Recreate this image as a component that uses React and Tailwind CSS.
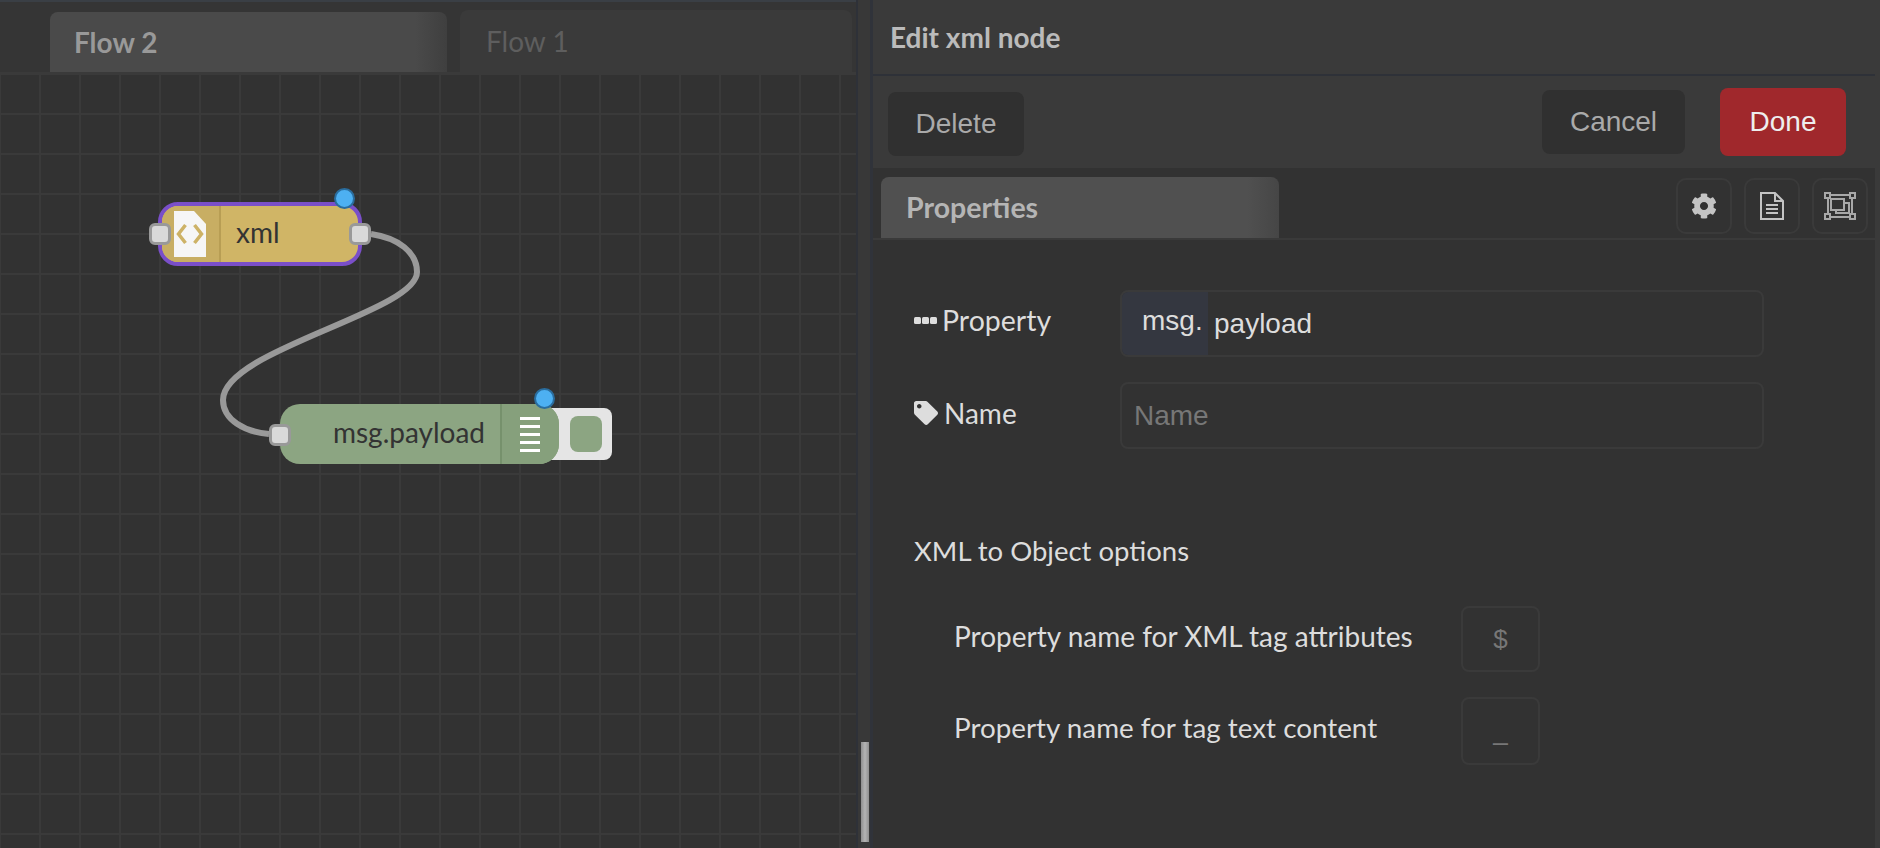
import React from 'react';
import { FaCog, FaTag } from 'react-icons/fa';

const lato = { fontFamily: 'Lato, sans-serif' };
const arial = { fontFamily: '"Liberation Sans", sans-serif' };

function Port({ className }) {
  return <div className={`absolute w-[22px] h-[22px] rounded-[6px] bg-[#d9d9d9] border-[3px] border-[#999999] ${className}`} />;
}

function Changed({ className }) {
  return <div className={`absolute w-[21px] h-[21px] rounded-full bg-[#4db0f2] border-[2.5px] border-[#2a6d9e] ${className}`} />;
}

function XmlNode() {
  return (
    <div className="absolute left-[158px] top-[128px] w-[204px] h-[64px]">
      <div className="flex h-full rounded-[20px] border-[4px] border-[#7a4fc9] bg-[#d0b566] overflow-hidden">
        <div className="w-[59px] shrink-0 bg-[#c8ae63] border-r-2 border-[#b89e54] pl-[12px] pt-[5px]">
          <svg width="32" height="46" viewBox="0 0 32 46">
            <path d="M0 0H20L32 13V46H0Z" fill="#f6f6f6" />
            <path d="M11.5 14L4.5 23L11.5 32M20.5 14L27.5 23L20.5 32" fill="none" stroke="#cdb266" strokeWidth="3.5" />
          </svg>
        </div>
        <div className="flex-1 pl-[15px] flex items-center text-[28px] leading-none text-[#333333] pb-[5px]">xml</div>
      </div>
      <Port className="left-[-9px] top-[21px]" />
      <Port className="right-[-9px] top-[21px]" />
      <Changed className="right-[7px] top-[-14px]" />
    </div>
  );
}

function DebugNode() {
  return (
    <div className="absolute left-[280px] top-[330px] w-[332px] h-[60px]">
      <div className="absolute right-0 top-[4px] w-[70px] h-[52px] rounded-[8px] bg-[#e5e5e5] flex items-center justify-end pr-[10px]">
        <div className="w-[32px] h-[36px] rounded-[8px] bg-[#8ca582]" />
      </div>
      <div className="absolute left-0 top-0 w-[279px] h-[60px] rounded-[20px] bg-[#8ca582] flex overflow-hidden">
        <div className="flex-1 pl-[53px] flex items-center text-[28px] leading-none text-[#333333] pb-[5px]">msg.payload</div>
        <div className="w-[59px] shrink-0 border-l-2 border-[#76916c] bg-[#86a07c] pl-[18px] pt-[13px] flex flex-col gap-[5px]">
          {[0, 1, 2, 3, 4].map((i) => (
            <div key={i} className="w-[20px] h-[3px] bg-white" />
          ))}
        </div>
      </div>
      <Port className="left-[-11px] top-[20px]" />
      <Changed className="left-[254px] top-[-16px]" />
    </div>
  );
}

function IconButton({ children }) {
  return (
    <div className="w-[56px] h-[56px] rounded-[10px] border-2 border-[#3a3a3a] flex items-center justify-center text-[#c4c4c4]">
      {children}
    </div>
  );
}

function FormLabel({ icon, children, textClass }) {
  return (
    <div className="w-[206px] shrink-0 flex items-center text-[28px] leading-none text-[#dddddd] pb-[6px]">
      <span className="w-[24px] flex justify-start">{icon}</span>
      <span className={textClass}>{children}</span>
    </div>
  );
}

export default function App() {
  return (
    <div className="w-[1880px] h-[848px] flex bg-[#323232] overflow-hidden" style={lato}>
      {/* Workspace */}
      <div className="w-[856px] h-full flex flex-col shrink-0">
        <div className="h-[74px] shrink-0 bg-[#353535] border-t-2 border-[#3a3f45] border-b-2 border-b-[#3a3a3a] flex items-end pl-[50px] gap-[13px]">
          <div className="w-[397px] h-[60px] rounded-t-[8px] bg-[linear-gradient(90deg,#4a4a4a_92%,#3f3f3f)] pl-[24px] flex items-center text-[28px] font-bold text-[#999999]">
            Flow 2
          </div>
          <div className="w-[392px] h-[62px] rounded-t-[8px] bg-[#3a3a3a] pl-[26px] flex items-center text-[28px] text-[#5e5e5e]">
            Flow 1
          </div>
        </div>
        <div className="relative flex-1 bg-[#323232] bg-[linear-gradient(#3a3a3a_2px,transparent_2px),linear-gradient(90deg,#3a3a3a_2px,transparent_2px)] bg-[size:40px_40px] bg-[position:-1px_-1px]">
          <svg className="absolute left-0 top-0" width="856" height="774" fill="none">
            <g transform="translate(0,-74)">
              <path d="M371 234C398 238 417 252 417 272C417 312 223 350 223 400C223 420 245 432 269 434" stroke="#999999" strokeWidth="6" />
            </g>
          </svg>
          <XmlNode />
          <DebugNode />
        </div>
      </div>

      {/* Separator */}
      <div className="w-[17px] h-full shrink-0 bg-[#383838] border-l-2 border-[#2e3138] border-r-[3px] border-r-[#30333a] flex flex-col justify-end pl-[3px] pb-[6px]">
        <div className="w-[8px] h-[100px] bg-[linear-gradient(90deg,#8f8f8f,#b4b4b4_50%,#8f8f8f)]" />
      </div>

      {/* Edit tray */}
      <div className="flex-1 h-full flex flex-col border-r-[5px] border-[#3a3a3a]">
        <div className="h-[76px] shrink-0 bg-[#3a3a3a] border-b-2 border-[#2e3138] pl-[17px] flex items-center text-[28px] font-bold text-[#bbbbbb]">
          Edit xml node
        </div>
        <div className="h-[92px] shrink-0 bg-[#3a3a3a] flex items-start pl-[15px] pr-[29px]" style={arial}>
          <div className="mt-[16px] w-[136px] h-[64px] rounded-[8px] bg-[#303030] flex items-center justify-center text-[28px] text-[#aaaaaa]">Delete</div>
          <div className="ml-auto mt-[14px] w-[143px] h-[64px] rounded-[8px] bg-[#303030] flex items-center justify-center text-[28px] text-[#aaaaaa]">Cancel</div>
          <div className="ml-[35px] mt-[12px] w-[126px] h-[68px] rounded-[8px] bg-[#a0282c] flex items-center justify-center text-[28px] text-[#eeeeee]">Done</div>
        </div>
        <div className="h-[72px] shrink-0 bg-[#323232] border-b-2 border-[#3a3a3a] flex items-end pl-[8px] pr-[7px]">
          <div className="w-[398px] h-[61px] rounded-t-[8px] bg-[linear-gradient(90deg,#505050_92%,#464646)] pl-[25px] flex items-center text-[28.5px] font-bold text-[#b5b5b5]">
            Properties
          </div>
          <div className="ml-auto flex gap-[12px] self-start mt-[10px]">
            <IconButton><FaCog size={26} /></IconButton>
            <IconButton>
              <svg width="24" height="28" viewBox="0 0 24 28" fill="none" stroke="currentColor" strokeWidth="2">
                <path d="M1 1H15L23 9V27H1Z" />
                <path d="M15 1V9H23M6 13H18M6 17H18M6 21H18" />
              </svg>
            </IconButton>
            <IconButton>
              <svg width="32" height="28" viewBox="0 0 32 28" fill="none" stroke="#a8a8a8" strokeWidth="2">
                <path d="M4 3H28V25H4Z" />
                <path d="M7 7H20V18H7Z" />
                <path d="M12 18V21H25V11H20" />
                <g fill="#323232">
                  <rect x="1" y="1" width="5" height="5" />
                  <rect x="26" y="1" width="5" height="5" />
                  <rect x="1" y="22" width="5" height="5" />
                  <rect x="26" y="22" width="5" height="5" />
                </g>
              </svg>
            </IconButton>
          </div>
        </div>

        <div className="flex-1 flex flex-col pl-[41px] pt-[50px]">
          <div className="flex items-center h-[67px]">
            <FormLabel
              textClass="ml-[4px] text-[28.5px]"
              icon={
                <svg width="24" height="8" viewBox="0 0 24 8" fill="#dddddd">
                  <rect x="0" y="0" width="7" height="7" rx="1.5" />
                  <rect x="8" y="0" width="7" height="7" rx="1.5" />
                  <rect x="16" y="0" width="7" height="7" rx="1.5" />
                </svg>
              }
            >
              Property
            </FormLabel>
            <div className="w-[644px] h-[67px] rounded-[8px] border-2 border-[#3a3a3a] flex items-stretch overflow-hidden text-[28px] text-[#dddddd]" style={arial}>
              <div className="w-[86px] bg-[#343740] pl-[20px] flex items-center pb-[5px]">msg.</div>
              <div className="pl-[6px] flex items-center">payload</div>
            </div>
          </div>
          <div className="flex items-center h-[67px] mt-[25px]">
            <FormLabel textClass="ml-[6px]" icon={<FaTag size={24} color="#dddddd" />}>
              Name
            </FormLabel>
            <div className="w-[644px] h-[67px] rounded-[8px] border-2 border-[#3a3a3a] pl-[12px] flex items-center text-[28px] text-[#777777]" style={arial}>
              Name
            </div>
          </div>

          <div className="mt-[85px] text-[27.5px] leading-[34px] text-[#dddddd]">XML to Object options</div>

          <div className="mt-[38px] pl-[40px] flex items-center h-[66px]">
            <div className="w-[507px] text-[28px] leading-none text-[#dddddd] pb-[6px]">Property name for XML tag attributes</div>
            <div className="w-[79px] h-[66px] rounded-[8px] border-2 border-[#3a3a3a] flex items-center justify-center text-[26px] text-[#777777]" style={arial}>$</div>
          </div>
          <div className="mt-[25px] pl-[40px] flex items-center h-[68px]">
            <div className="w-[507px] text-[27.8px] leading-none text-[#dddddd] pb-[6px]">Property name for tag text content</div>
            <div className="w-[79px] h-[68px] rounded-[8px] border-2 border-[#3a3a3a] flex items-center justify-center text-[26px] text-[#777777]" style={arial}>_</div>
          </div>
        </div>
      </div>
    </div>
  );
}
